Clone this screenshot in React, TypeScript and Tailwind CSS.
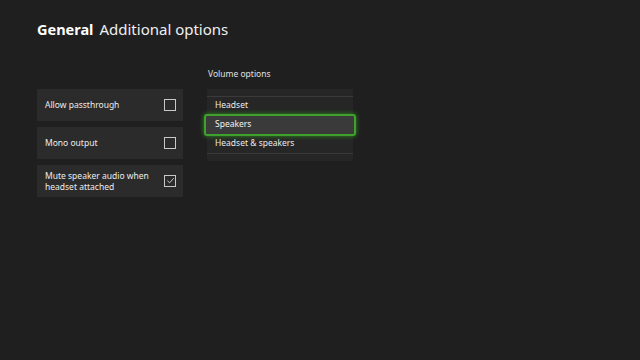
import React from "react";

const font = { fontFamily: '"Noto Sans", "Open Sans", sans-serif' };

function Checkbox({ checked }: { checked?: boolean }) {
  return (
    <div className="w-[12px] h-[12px] border border-[#c8c8c8] flex items-center justify-center shrink-0">
      {checked && (
        <svg width="9" height="9" viewBox="0 0 10 10" fill="none">
          <path d="M1.5 5.2 L4 7.6 L8.6 2.4" stroke="#d8d8d8" strokeWidth="1" />
        </svg>
      )}
    </div>
  );
}

function OptionCard({ label, checked }: { label: React.ReactNode; checked?: boolean }) {
  return (
    <div className="w-[146px] h-[32px] bg-[#2b2b2b] flex items-center justify-between pl-[8px] pr-[7px]">
      <span className="text-[8.5px] leading-[11px] text-[#ececec]">{label}</span>
      <Checkbox checked={checked} />
    </div>
  );
}

export default function App() {
  const volume = ["Headset", "Speakers", "Headset & speakers"];
  return (
    <div className="w-[640px] h-[360px] bg-[#1f1f1f] text-white overflow-hidden" style={font}>
      <div className="pt-[18px] pl-[37px] flex items-baseline gap-[6px]">
        <span className="text-[14.5px] font-bold">General</span>
        <span className="text-[15px] text-[#f0f0f0]">Additional options</span>
      </div>

      <div className="flex gap-[24px] pl-[37px] pt-[27px]">
        <div className="flex flex-col gap-[6px] pt-[21px]">
          <OptionCard label="Allow passthrough" />
          <OptionCard label="Mono output" />
          <OptionCard
            checked
            label={
              <>
                Mute speaker audio when
                <br />
                headset attached
              </>
            }
          />
        </div>

        <div className="flex flex-col">
          <span className="text-[8.5px] text-[#e0e0e0] pl-[1px] leading-[12px]">Volume options</span>
          <div className="mt-[9px] w-[146px] bg-[#262626] pt-[7px] pb-[7px]">
            <div className="border-t border-[#3a3a3a]" />
            <div className="h-[18px] flex items-center pl-[8px] text-[8.5px] text-[#ececec] border-b border-[#3a3a3a]">
              {volume[0]}
            </div>
            <div className="relative h-[20px]">
              <div className="absolute -left-[3px] -right-[3px] -top-[1px] -bottom-[1px] rounded-[3px] border-2 border-[#3fa02e] bg-[#3a3a3a] shadow-[0_0_5px_#2f8a22] flex items-center pl-[9px] text-[8.5px] text-[#f2f2f2]">
                {volume[1]}
              </div>
            </div>
            <div className="h-[19px] flex items-center pl-[8px] text-[8.5px] text-[#ececec] border-b border-[#3a3a3a]">
              {volume[2]}
            </div>
          </div>
        </div>
      </div>
    </div>
  );
}
